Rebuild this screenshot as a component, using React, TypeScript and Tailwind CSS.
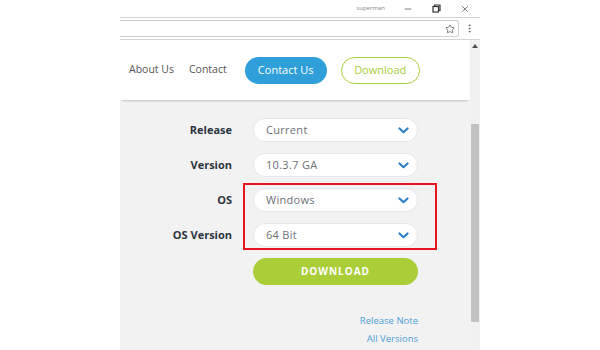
import { Star, MoreVertical, Minus, X } from 'lucide-react'

const font = { fontFamily: '"Open Sans", "Liberation Sans", sans-serif' }

function Chevron() {
  return (
    <svg width="11" height="7" viewBox="0 0 11 7" fill="none">
      <path d="M1.5 1.5 L5.5 5.2 L9.5 1.5" stroke="#2d82cc" strokeWidth="2.2" strokeLinecap="round" strokeLinejoin="round" />
    </svg>
  )
}

function Select({ value }: { value: string }) {
  return (
    <div className="h-[24px] w-[165px] bg-white border border-[#e3e6ea] rounded-full flex items-center justify-between pl-[12px] pr-[8px]">
      <span className="text-[11px] text-[#6b6f76] tracking-[0.3px]">{value}</span>
      <Chevron />
    </div>
  )
}

export default function App() {
  const rows = [
    { label: 'Release', value: 'Current' },
    { label: 'Version', value: '10.3.7 GA' },
    { label: 'OS', value: 'Windows' },
    { label: 'OS Version', value: '64 Bit' },
  ]

  return (
    <div className="w-[600px] h-[350px] bg-white flex overflow-hidden" style={font}>
      <div className="w-[120px]" />
      <div className="w-[360px] flex flex-col">
        {/* title bar */}
        <div className="h-[17px] flex items-center justify-end text-[#333]">
          <span className="text-[6px] text-[#888] mr-[18px]">superman</span>
          <Minus size={10} strokeWidth={1.5} className="mr-[19px]" />
          <svg width="9" height="9" viewBox="0 0 9 9" className="mr-[19px]" fill="none" stroke="#333" strokeWidth="1.2">
            <rect x="1" y="2.5" width="5.5" height="5.5" />
            <path d="M2.5 2.5 V1 H8 V6.5 H6.5" />
          </svg>
          <X size={10} strokeWidth={1.5} className="mr-[10px]" />
        </div>
        {/* toolbar */}
        <div className="h-[23px] border-t border-b border-[#d4d4d4] flex items-center">
          <div className="flex-1 h-[17px] border border-l-0 border-[#cfcfcf] rounded-r-[3px] flex items-center justify-end pr-[3px]">
            <Star size={10} strokeWidth={1.6} className="text-[#444]" />
          </div>
          <div className="w-[21px] flex justify-center">
            <MoreVertical size={11} strokeWidth={2} className="text-[#555]" />
          </div>
        </div>
        {/* content */}
        <div className="flex-1 flex overflow-hidden">
          <div className="flex-1 bg-[#f2f2f2] flex flex-col relative">
            <div className="h-[60px] bg-white shadow-[0_3px_2px_-2px_rgba(0,0,0,0.2)] flex items-center pl-[9px]">
              <span className="text-[10.5px] text-[#555]">About Us</span>
              <span className="text-[10.5px] text-[#555] ml-[15px]">Contact</span>
              <div className="ml-[18px] h-[27px] w-[82px] rounded-full bg-[#2e9fd8] text-white text-[11px] flex items-center justify-center">
                Contact Us
              </div>
              <div className="ml-[14px] h-[27px] w-[79px] rounded-full border border-[#a8cf38] text-[#a8cf38] text-[11px] flex items-center justify-center">
                Download
              </div>
            </div>
            <div className="pt-[18px] flex flex-col">
              <div className="grid grid-cols-[112px_165px] gap-x-[21px] gap-y-[11px] items-center">
                {rows.map((r) => (
                  <div key={r.label} className="contents">
                    <div className="text-right text-[11px] font-bold text-[#2c3440]">{r.label}</div>
                    <Select value={r.value} />
                  </div>
                ))}
                <div />
                <div className="h-[27px] rounded-full bg-[#a9ce38] text-white text-[10px] font-bold tracking-[1px] flex items-center justify-center">
                  DOWNLOAD
                </div>
              </div>
              <div className="w-[298px] flex flex-col items-end mt-[29px] gap-[5px] text-[9.5px] text-[#4a9ed8] leading-[13px]">
                <span>Release Note</span>
                <span>All Versions</span>
              </div>
            </div>
            <div className="absolute left-[123px] top-[143px] w-[194px] h-[67px] border-2 border-[#e8141b]" />
          </div>
          {/* scrollbar */}
          <div className="w-[10px] bg-[#f1f1f1] flex flex-col items-center">
            <svg width="6" height="4" viewBox="0 0 6 4" className="mt-[4px]">
              <path d="M0 4 L3 0 L6 4 Z" fill="#505050" />
            </svg>
            <div className="mt-[76px] w-[8px] h-[198px] bg-[#c1c1c1]" />
          </div>
        </div>
      </div>
      <div className="w-[120px]" />
    </div>
  )
}
